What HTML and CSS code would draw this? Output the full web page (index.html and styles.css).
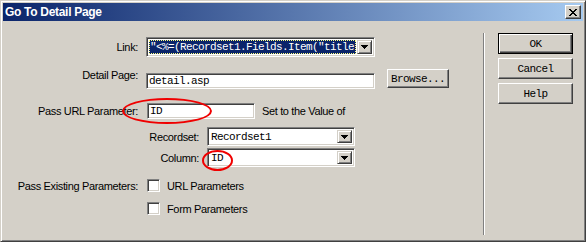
FILE: index.html
```html
<!DOCTYPE html>
<html>
<head>
<meta charset="utf-8">
<title>Go To Detail Page</title>
<link rel="stylesheet" href="styles.css">
</head>
<body>
<div class="window">
  <div class="titlebar">
    <span class="title">Go To Detail Page</span>
    <span class="close">
      <svg width="8" height="7" viewBox="0 0 8 7"><path d="M0 0h2v1H0zM6 0h2v1H6zM1 1h2v1H1zM5 1h2v1H5zM2 2h4v1H2zM3 3h2v1H3zM2 4h4v1H2zM1 5h2v1H1zM5 5h2v1H5zM0 6h2v1H0zM6 6h2v1H6z" fill="#000"/></svg>
    </span>
  </div>
  <div class="content">
    <div class="form">
      <div class="row r-link">
        <span class="label">Link:</span>
        <div class="field combo combo-link">
          <span class="combo-text selected"><span class="focus">"&lt;%=(Recordset1.Fields.Item("title</span></span>
          <span class="drop"><svg width="7" height="4" viewBox="0 0 7 4"><path d="M0 0h7v1H0zM1 1h5v1H1zM2 2h3v1H2zM3 3h1v1H3z" fill="#000"/></svg></span>
        </div>
      </div>
      <div class="row r-detail">
        <span class="label">Detail Page:</span>
        <div class="field textbox tb-detail">detail.asp</div>
        <div class="button btn-browse">Browse...</div>
      </div>
      <div class="row r-url">
        <span class="label">Pass URL Parameter:</span>
        <div class="field textbox tb-url">ID</div>
        <span class="plain set-to">Set to the Value of</span>
      </div>
      <div class="row r-rs">
        <span class="label label-wide">Recordset:</span>
        <div class="field combo combo-sub">
          <span class="combo-text">Recordset1</span>
          <span class="drop"><svg width="7" height="4" viewBox="0 0 7 4"><path d="M0 0h7v1H0zM1 1h5v1H1zM2 2h3v1H2zM3 3h1v1H3z" fill="#000"/></svg></span>
        </div>
      </div>
      <div class="row r-col">
        <span class="label label-wide">Column:</span>
        <div class="field combo combo-sub">
          <span class="combo-text">ID</span>
          <span class="drop"><svg width="7" height="4" viewBox="0 0 7 4"><path d="M0 0h7v1H0zM1 1h5v1H1zM2 2h3v1H2zM3 3h1v1H3z" fill="#000"/></svg></span>
        </div>
      </div>
      <div class="row r-check1">
        <span class="label">Pass Existing Parameters:</span>
        <span class="checkbox"></span>
        <span class="plain check-label">URL Parameters</span>
      </div>
      <div class="row r-check2">
        <span class="label"></span>
        <span class="checkbox"></span>
        <span class="plain check-label">Form Parameters</span>
      </div>
    </div>
    <div class="separator"></div>
    <div class="buttons">
      <div class="button push default">OK</div>
      <div class="button push">Cancel</div>
      <div class="button push">Help</div>
    </div>
  </div>
  <div class="mark mark-url"></div>
  <div class="mark mark-col"></div>
</div>
</body>
</html>
```
FILE: styles.css
```css
html, body {
  margin: 0;
  padding: 0;
  background: #d4d0c8;
}

.window {
  position: relative;
  width: 586px;
  height: 242px;
  box-sizing: border-box;
  padding: 2px;
  border: 1px solid;
  border-color: #d4d0c8 #404040 #404040 #d4d0c8;
  box-shadow: inset 1px 1px #ffffff, inset -1px -1px #808080;
  background: #d4d0c8;
  font-family: "Liberation Sans", Arial, sans-serif;
  font-size: 11px;
  letter-spacing: -0.35px;
  color: #000;
  overflow: hidden;
}

.titlebar {
  height: 18px;
  display: flex;
  align-items: center;
  justify-content: space-between;
  padding: 0 2px 0 2px;
  background: linear-gradient(to right, #0a246a, #a6caf0);
}

.title {
  color: #fff;
  font-weight: bold;
  font-size: 12px;
  letter-spacing: -0.3px;
}

.close {
  width: 14px;
  height: 12px;
  display: flex;
  align-items: center;
  justify-content: center;
  background: #d4d0c8;
  border: 1px solid;
  border-color: #ffffff #404040 #404040 #ffffff;
  box-shadow: inset -1px -1px #808080;
}

.content {
  display: flex;
  height: 218px;
}

.form {
  width: 480px;
  display: flex;
  flex-direction: column;
}

.row {
  display: flex;
  align-items: center;
}

.label {
  width: 135px;
  flex: none;
  text-align: right;
  white-space: nowrap;
}

.label-wide {
  width: 196px;
}

.plain {
  white-space: nowrap;
}

.mono, .field, .button {
  font-family: "Liberation Mono", "Courier New", monospace;
  font-size: 11px;
  letter-spacing: -0.6px;
}

.field {
  box-sizing: border-box;
  margin-left: 8px;
  background: #fff;
  border: 1px solid;
  border-color: #808080 #ffffff #ffffff #808080;
  box-shadow: inset 1px 1px #404040, inset -1px -1px #d4d0c8;
  white-space: nowrap;
  overflow: hidden;
}

.r-link {
  margin-top: 16px;
  height: 20px;
}

.combo {
  display: flex;
  align-items: stretch;
  padding: 2px;
}

.combo-link {
  width: 229px;
  height: 20px;
}

.combo-text {
  flex: 1;
  display: flex;
  align-items: center;
  padding-left: 1px;
  overflow: hidden;
}

.combo-text.selected {
  background: #0a246a;
  color: #fff;
  margin-right: 1px;
  padding-left: 0;
}

.focus {
  display: flex;
  align-items: center;
  height: 100%;
  box-sizing: border-box;
  padding-left: 1px;
  outline: 1px dotted #ffff80;
  outline-offset: -1px;
  flex: 1;
}

.drop {
  box-sizing: border-box;
  width: 15px;
  flex: none;
  display: flex;
  align-items: center;
  justify-content: center;
  background: #d4d0c8;
  border: 1px solid;
  border-color: #d4d0c8 #404040 #404040 #d4d0c8;
  box-shadow: inset 1px 1px #ffffff, inset -1px -1px #808080;
}

.r-detail {
  margin-top: 12px;
  height: 19px;
  align-items: flex-start;
}

.textbox {
  display: flex;
  align-items: center;
  padding-left: 2px;
}

.tb-detail {
  width: 229px;
  height: 16px;
  margin-top: 4px;
}

.button {
  box-sizing: border-box;
  display: flex;
  align-items: center;
  justify-content: center;
  background: #d4d0c8;
  border: 1px solid;
  border-color: #ffffff #404040 #404040 #ffffff;
  box-shadow: inset -1px -1px #808080;
  white-space: nowrap;
}

.btn-browse {
  width: 62px;
  height: 19px;
  margin-left: 12px;
}

.r-url {
  margin-top: 15px;
  height: 16px;
}

.tb-url {
  width: 108px;
  height: 16px;
  margin-left: 9px;
}

.set-to {
  margin-left: 7px;
}

.r-rs {
  margin-top: 8px;
  height: 19px;
}

.r-col {
  margin-top: 2px;
  height: 19px;
}

.combo-sub {
  width: 148px;
  height: 19px;
}

.r-check1 {
  margin-top: 12px;
  height: 13px;
}

.r-check2 {
  margin-top: 10px;
  height: 13px;
}

.checkbox {
  box-sizing: border-box;
  width: 13px;
  height: 13px;
  margin-left: 9px;
  background: #fff;
  border: 1px solid;
  border-color: #808080 #ffffff #ffffff #808080;
  box-shadow: inset 1px 1px #404040, inset -1px -1px #d4d0c8;
}

.check-label {
  margin-left: 7px;
}

.separator {
  width: 1px;
  height: 202px;
  margin-top: 12px;
  border-left: 1px solid #808080;
  border-right: 1px solid #ffffff;
  box-sizing: border-box;
  width: 2px;
}

.buttons {
  margin-left: 13px;
  margin-top: 12px;
  display: flex;
  flex-direction: column;
  gap: 4px;
}

.push {
  width: 75px;
  height: 21px;
}

.push.default {
  border: 1px solid #000;
  box-shadow: inset 1px 1px #ffffff, inset -1px -1px #404040, inset -2px -2px #808080;
}

.mark {
  position: absolute;
  box-sizing: border-box;
  border: 2px solid #f00000;
  border-radius: 50%;
}

.mark-url {
  left: 121px;
  top: 97px;
  width: 90px;
  height: 26px;
}

.mark-col {
  left: 201px;
  top: 149px;
  width: 31px;
  height: 21px;
}
```
